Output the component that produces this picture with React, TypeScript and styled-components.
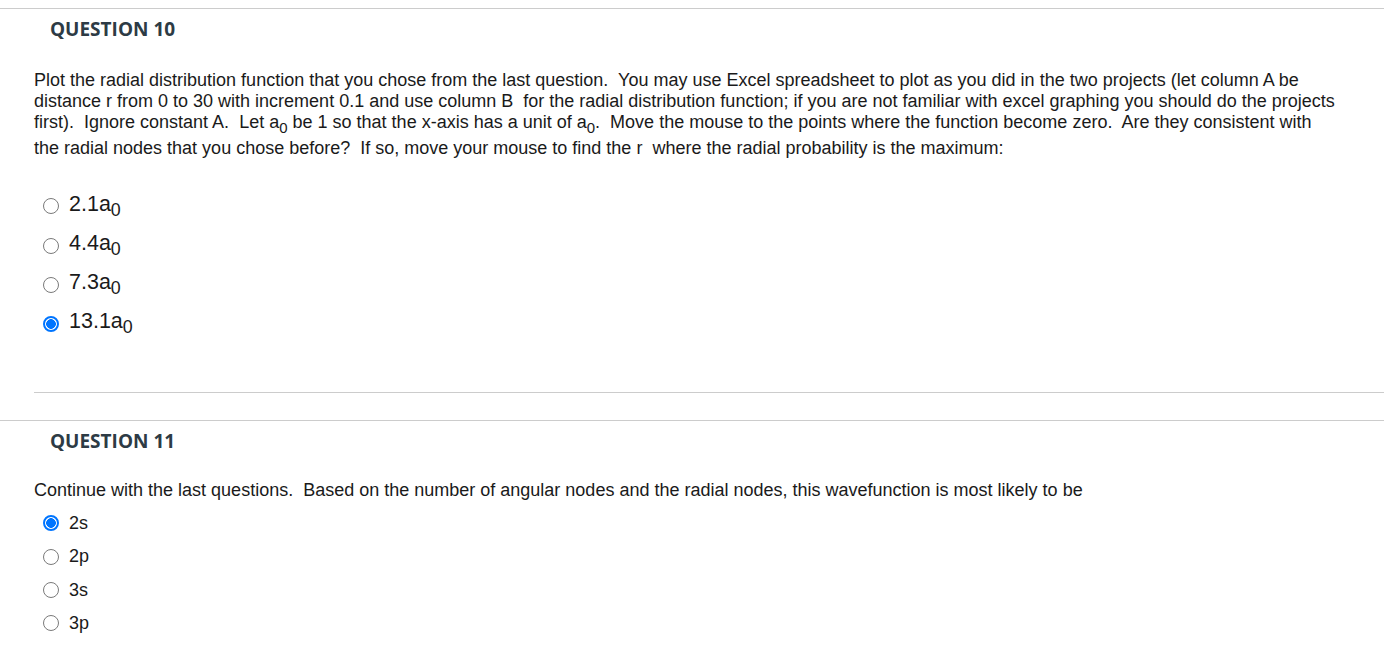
import { createGlobalStyle } from 'styled-components';
import styled from 'styled-components';

const GlobalStyle = createGlobalStyle`
  html, body {
    margin: 0;
    padding: 0;
    background: #fff;
  }
  body {
    font-family: "Liberation Sans", Arial, sans-serif;
    color: #1a1a1a;
  }
`;

const Page = styled.div`
  padding-top: 8px;
  padding-bottom: 40px;
`;

const Question = styled.section`
  border-top: 1px solid #cccccc;
`;

const QuestionHeader = styled.h3`
  margin: 8px 0 0 50px;
  font-family: "Open Sans", sans-serif;
  font-weight: 700;
  font-size: 19px;
  line-height: 25px;
  color: #2d3b45;
`;

const Body = styled.div<{ $divider?: boolean }>`
  margin-left: 34px;
  padding-top: ${(p) => (p.$divider ? '28px' : '26px')};
  padding-bottom: ${(p) => (p.$divider ? '48px' : '0')};
  border-bottom: ${(p) => (p.$divider ? '1px solid #cccccc' : 'none')};
  margin-bottom: ${(p) => (p.$divider ? '27px' : '0')};
`;

const Prompt = styled.p`
  margin: 0;
  max-width: 1303px;
  font-size: 18px;
  line-height: 21px;
`;

const Options = styled.ul<{ $large?: boolean }>`
  list-style: none;
  margin: ${(p) => (p.$large ? '28px 0 0' : '6px 0 0')};
  padding: 0;
  display: flex;
  flex-direction: column;
`;

const Option = styled.li<{ $large?: boolean }>`
  display: flex;
  align-items: center;
  height: ${(p) => (p.$large ? '39.3px' : '33.3px')};
  gap: 10px;
  padding-left: 9px;
`;

const Radio = styled.input.attrs({ type: 'radio' })`
  appearance: none;
  -webkit-appearance: none;
  box-sizing: border-box;
  width: 16px;
  height: 16px;
  margin: 0;
  border-radius: 50%;
  border: 1.5px solid #7a7a7a;
  background: #fff;
  flex: none;
  &:checked {
    border: 2px solid #0075ff;
    background: radial-gradient(circle, #0075ff 0 4.6px, #fff 5px);
  }
`;

const Label = styled.label<{ $large?: boolean }>`
  font-size: ${(p) => (p.$large ? '21.5px' : '18px')};
  color: #1a1a1a;
  sub {
    font-size: 0.83em;
  }
`;

const A0 = () => (
  <>
    a<sub>0</sub>
  </>
);

const q10Options = ['2.1', '4.4', '7.3', '13.1'];
const q11Options = ['2s', '2p', '3s', '3p'];

export default function App() {
  return (
    <Page>
      <GlobalStyle />
      <Question>
        <QuestionHeader>QUESTION 10</QuestionHeader>
        <Body $divider>
          <Prompt>
            Plot the radial distribution function that you chose from the last question.{'\u00a0 '}You may use
            Excel spreadsheet to plot as you did in the two projects (let column A be distance r from 0 to 30
            with increment 0.1 and use column B{'\u00a0 '}for the radial distribution function; if you are not
            familiar with excel graphing you should do the projects first).{'\u00a0 '}Ignore constant A.{'\u00a0 '}Let{' '}
            <A0 /> be 1 so that the x-axis has a unit of <A0 />.{'\u00a0 '}Move the mouse to the points where the
            function become zero.{'\u00a0 '}Are they consistent with the radial nodes that you chose before?{'\u00a0 '}If
            so, move your mouse to find the r{'\u00a0 '}where the radial probability is the maximum:
          </Prompt>
          <Options $large>
            {q10Options.map((v, i) => (
              <Option $large key={v}>
                <Radio name="q10" id={`q10-${i}`} defaultChecked={i === 3} />
                <Label $large htmlFor={`q10-${i}`}>
                  {v}
                  <A0 />
                </Label>
              </Option>
            ))}
          </Options>
        </Body>
      </Question>
      <Question>
        <QuestionHeader>QUESTION 11</QuestionHeader>
        <Body>
          <Prompt>
            Continue with the last questions.{'\u00a0 '}Based on the number of angular nodes and the radial nodes,
            this wavefunction is most likely to be
          </Prompt>
          <Options>
            {q11Options.map((v, i) => (
              <Option key={v}>
                <Radio name="q11" id={`q11-${i}`} defaultChecked={i === 0} />
                <Label htmlFor={`q11-${i}`}>{v}</Label>
              </Option>
            ))}
          </Options>
        </Body>
      </Question>
    </Page>
  );
}
